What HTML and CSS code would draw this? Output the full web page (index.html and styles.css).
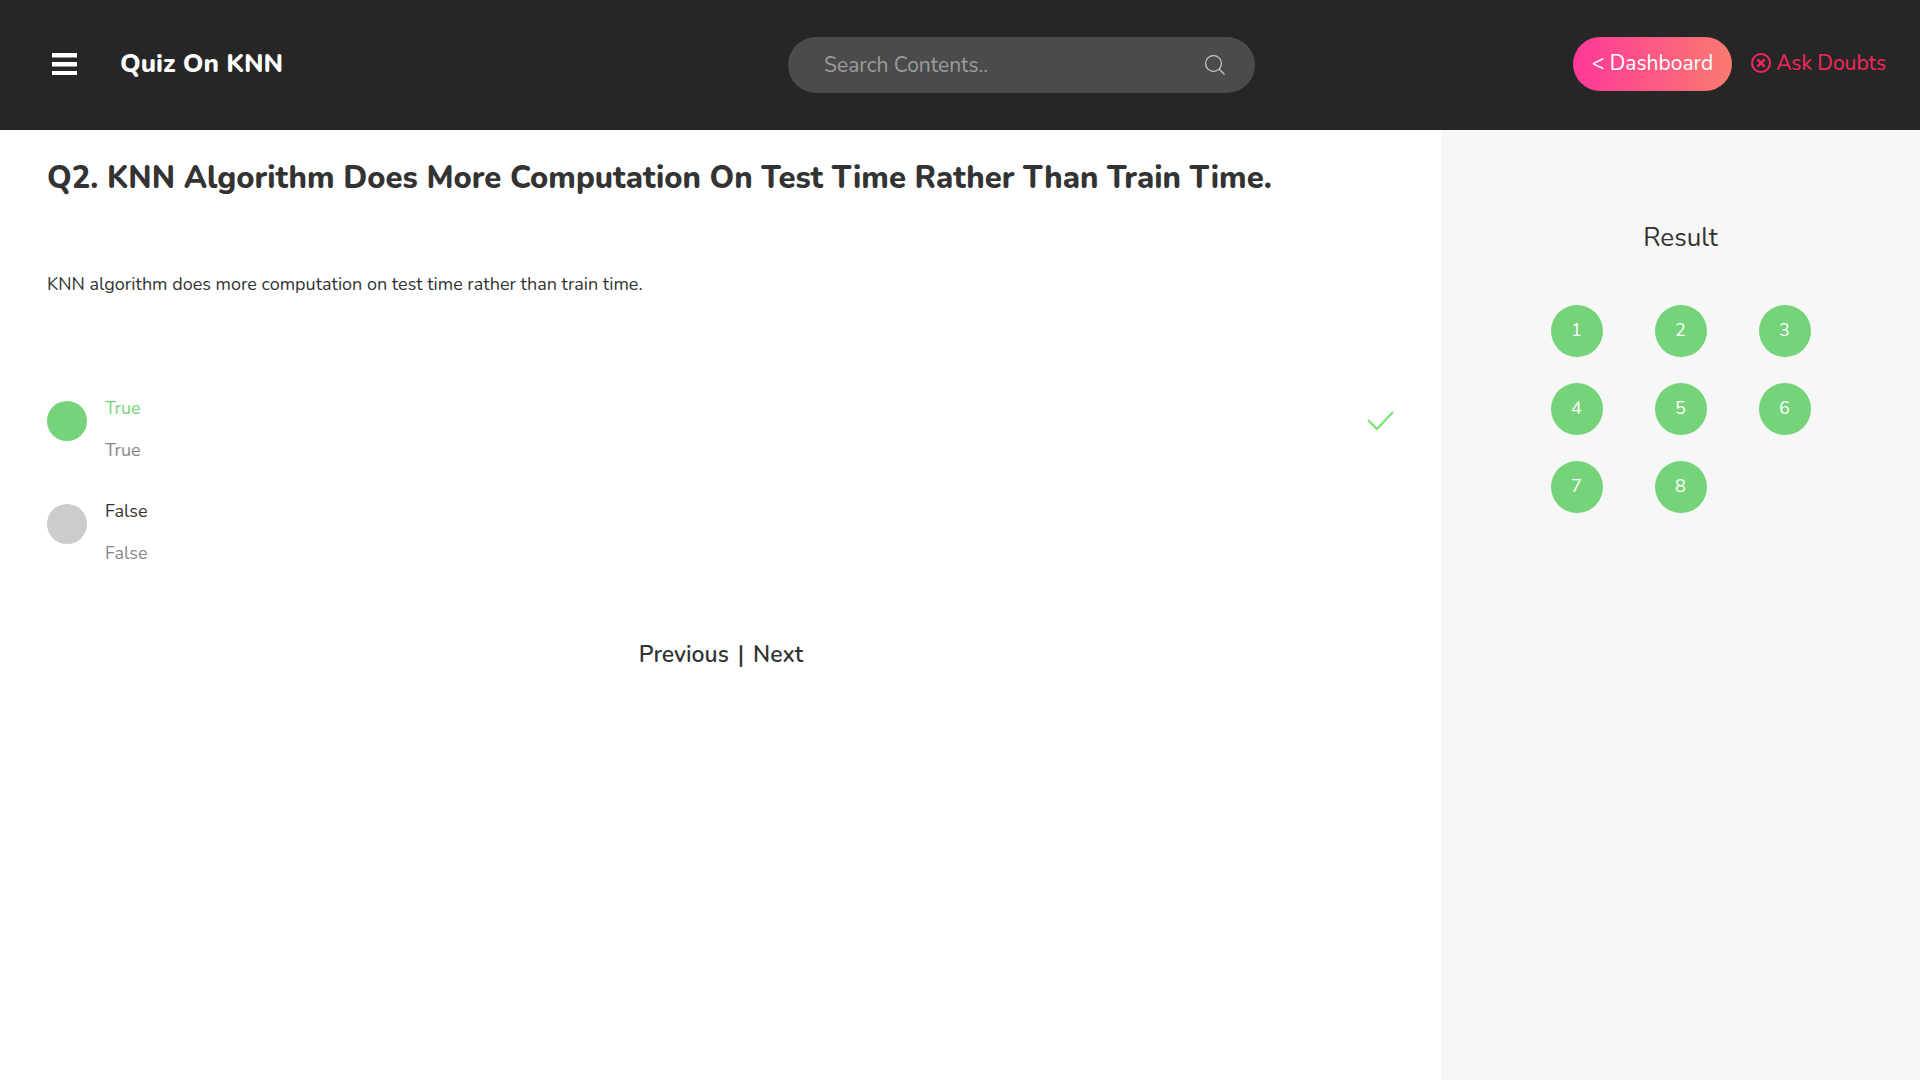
FILE: index.html
```html
<!DOCTYPE html>
<html lang="en">
<head>
<meta charset="utf-8">
<meta name="viewport" content="width=device-width, initial-scale=1">
<title>Quiz On KNN</title>
<link rel="stylesheet" href="styles.css">
</head>
<body>
<header class="topbar">
  <div class="topbar-left">
    <button class="menu" type="button" aria-label="Menu">
      <svg width="25" height="22" viewBox="0 0 25 22"><path fill="currentColor" d="M0 0h25v4.500H0zM0 9h25v4.500H0zM0 18h25v4H0z"/></svg>
    </button>
    <h1 class="title">Quiz On KNN</h1>
  </div>
  <form class="search">
    <input class="search-input" type="text" placeholder="Search Contents.." aria-label="Search contents">
    <button class="search-button" type="submit" aria-label="Search">
      <svg width="20" height="20" viewBox="0 0 20 20" fill="none" stroke="currentColor" stroke-width="1.200"><circle cx="8.500" cy="8.500" r="7.900"/><path d="M14 14l5.500 5.500"/></svg>
    </button>
  </form>
  <nav class="actions">
    <button class="dashboard" type="button">&lt; Dashboard</button>
    <a class="ask" href="#">
      <svg width="20" height="20" viewBox="0 0 20 20" fill="none" stroke="currentColor"><circle cx="10" cy="10" r="9" stroke-width="2"/><path stroke-width="2.400" d="M6.400 6.400l7.200 7.200M13.600 6.400l-7.200 7.200"/></svg>
      Ask Doubts
    </a>
  </nav>
</header>
<div class="layout">
  <main class="quiz">
    <h2 class="heading">Q2. KNN Algorithm Does More Computation On Test Time Rather Than Train Time.</h2>
    <p class="question">KNN algorithm does more computation on test time rather than train time.</p>
    <div class="options">
      <div class="option correct">
        <input class="radio" type="radio" name="answer" id="answer-true" checked>
        <div class="option-text">
          <label class="option-label" for="answer-true">True</label>
          <p class="option-note">True</p>
        </div>
        <svg class="tick" width="28" height="20" viewBox="0 0 28 20" fill="none" stroke="currentColor" stroke-width="2"><path d="M1 10l9 9L26 2"/></svg>
      </div>
      <div class="option">
        <input class="radio" type="radio" name="answer" id="answer-false">
        <div class="option-text">
          <label class="option-label" for="answer-false">False</label>
          <p class="option-note">False</p>
        </div>
      </div>
    </div>
    <nav class="pager"><a href="#">Previous</a><span>|</span><a href="#">Next</a></nav>
  </main>
  <aside class="result">
    <h2 class="result-title">Result</h2>
    <div class="numbers">
      <button class="number" type="button">1</button>
      <button class="number" type="button">2</button>
      <button class="number" type="button">3</button>
      <button class="number" type="button">4</button>
      <button class="number" type="button">5</button>
      <button class="number" type="button">6</button>
      <button class="number" type="button">7</button>
      <button class="number" type="button">8</button>
    </div>
  </aside>
</div>
</body>
</html>
```

FILE: styles.css
```css
* { box-sizing: border-box; margin: 0; }
body {
  min-height: 100vh;
  display: flex;
  flex-direction: column;
  font: 18px/28px Nunito, Lato, sans-serif;
  color: #333;
  background: #fff;
}
button, input { font: inherit; border: 0; padding: 0; }
button { cursor: pointer; background: none; }
a { color: inherit; text-decoration: none; }
svg { display: block; flex: none; }

.topbar {
  display: grid;
  grid-template-columns: 7fr minmax(300px, 467px) 6fr;
  align-items: start;
  padding: 37px 34px 37px 52px;
  background: #262626;
  color: #fff;
}
.topbar-left { display: flex; align-items: center; gap: 43px; height: 54px; }
.menu { color: #fff; }
.title { font-size: 26px; line-height: 36px; font-weight: 800; }
.search {
  display: flex;
  align-items: center;
  height: 56px;
  padding: 0 30px 0 36px;
  border-radius: 28px;
  background: #4b4b4b;
}
.search-input { flex: 1; min-width: 0; font-size: 21px; background: none; color: #fff; outline: 0; }
.search-input::placeholder { color: #9c9c9c; opacity: 1; }
.search-button { color: #ccc; }
.actions { display: flex; align-items: center; justify-content: flex-end; gap: 19px; height: 52px; font-size: 21px; }
.dashboard {
  height: 54px;
  margin-top: 2px;
  padding: 0 19px 2px;
  border-radius: 27px;
  color: #fff;
  background: linear-gradient(90deg, #ff3898, #f97a70);
}
.ask { display: flex; align-items: center; gap: 5px; color: #f9265d; }

.layout { flex: 1; display: grid; grid-template-columns: 3fr 1fr; }
.quiz { padding: 26px 45px 26px 47px; }
.heading { font-size: 31px; line-height: 44px; font-weight: 800; }
.question { margin-top: 70px; }
.options { display: grid; gap: 33px; margin-top: 96px; }
.option { display: flex; align-items: flex-start; gap: 18px; }
.radio { appearance: none; flex: none; width: 40px; height: 40px; margin-top: 7px; border-radius: 50%; background: #ccc; }
.option-text { flex: 1; display: grid; gap: 14px; }
.option-note { color: #888; }
.correct .radio { background: #75d37a; }
.correct .option-label { color: #75d37a; }
.tick { margin-top: 16px; color: #75e36a; }
.pager { display: flex; justify-content: center; gap: 9px; margin-top: 72px; font-size: 23px; line-height: 32px; font-weight: 600; }

.result { margin-left: 1px; padding: 90px 20px; background: #f7f7f7; text-align: center; }
.result-title { font-size: 26px; line-height: 36px; font-weight: 400; }
.numbers { display: grid; grid-template-columns: repeat(3, 52px); justify-content: center; gap: 26px 52px; margin-top: 49px; }
.number { height: 52px; padding-bottom: 2px; border-radius: 50%; background: #75d37a; color: #fff; }
```
